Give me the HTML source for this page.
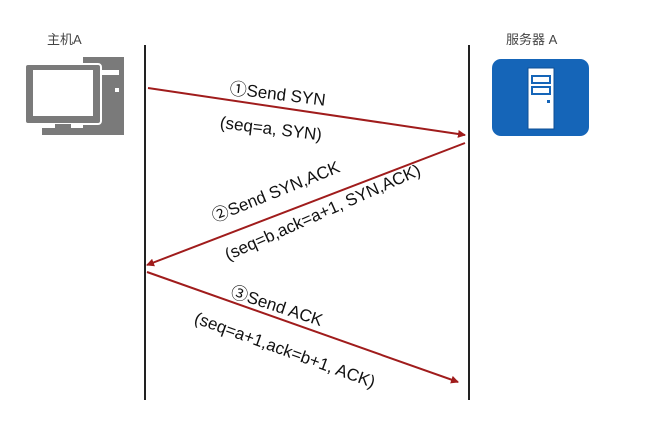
<!DOCTYPE html>
<html><head><meta charset="utf-8"><style>
body{margin:0;width:662px;height:424px;background:#fff;overflow:hidden;position:relative;font-family:"Liberation Sans","Noto Sans CJK SC",sans-serif}
.t{position:absolute;font-size:17px;color:#111;white-space:nowrap;transform-origin:0 50%}
.l{position:absolute;font-size:13px;color:#444}
</style></head><body>
<div class="l" style="left:47px;top:29px">主机A</div>
<div class="l" style="left:506px;top:29px">服务器 A</div>
<svg width="662" height="424" style="position:absolute;left:0;top:0">
<line x1="145" y1="45" x2="145" y2="400" stroke="#222" stroke-width="2"/>
<line x1="469" y1="45" x2="469" y2="400" stroke="#222" stroke-width="2"/>
<rect x="83" y="57" width="41" height="78" fill="#7a7a7a"/>
<rect x="101" y="70" width="18" height="5" fill="#fff"/>
<rect x="115" y="88" width="4" height="4" fill="#fff"/>
<rect x="25" y="64" width="76" height="60" rx="3" fill="#7a7a7a" stroke="#fff" stroke-width="2"/>
<rect x="33" y="70" width="60" height="46" fill="#fff"/>
<rect x="55" y="124" width="16" height="5" fill="#7a7a7a"/>
<rect x="42" y="128" width="42" height="7" fill="#7a7a7a"/>
<rect x="492" y="59" width="97" height="77" rx="9" fill="#1565b8"/>
<rect x="528" y="68" width="26" height="61" fill="#fff" stroke="#0f4f94" stroke-width="1"/>
<rect x="532" y="76" width="18" height="7" fill="none" stroke="#1565b8" stroke-width="2"/>
<rect x="532" y="87" width="18" height="7" fill="none" stroke="#1565b8" stroke-width="2"/>
<rect x="547" y="100" width="3" height="3" fill="#1565b8"/>
<defs><marker id="a" markerWidth="8" markerHeight="8" refX="7" refY="4" orient="auto" markerUnits="userSpaceOnUse"><path d="M0,0 L8,4 L0,8z" fill="#a01c1c"/></marker></defs>
<g stroke="#a01c1c" stroke-width="2" marker-end="url(#a)">
<line x1="148" y1="88" x2="465" y2="135"/>
<line x1="465" y1="143" x2="147" y2="265"/>
<line x1="147" y1="272" x2="458" y2="382"/>
</g>
</svg>
<div class="t" style="left:230px;top:74px;transform:rotate(7deg)">①Send SYN</div>
<div class="t" style="left:220px;top:113px;transform:rotate(7deg)">(seq=a, SYN)</div>
<div class="t" style="left:212px;top:203px;transform:rotate(-22deg)">②Send SYN,ACK</div>
<div class="t" style="left:226px;top:246px;transform:rotate(-24deg)">(seq=b,ack=a+1, SYN,ACK)</div>
<div class="t" style="left:232px;top:277px;transform:rotate(18deg)">③Send ACK</div>
<div class="t" style="left:195px;top:308px;transform:rotate(20deg)">(seq=a+1,ack=b+1, ACK)</div>
</body></html>
